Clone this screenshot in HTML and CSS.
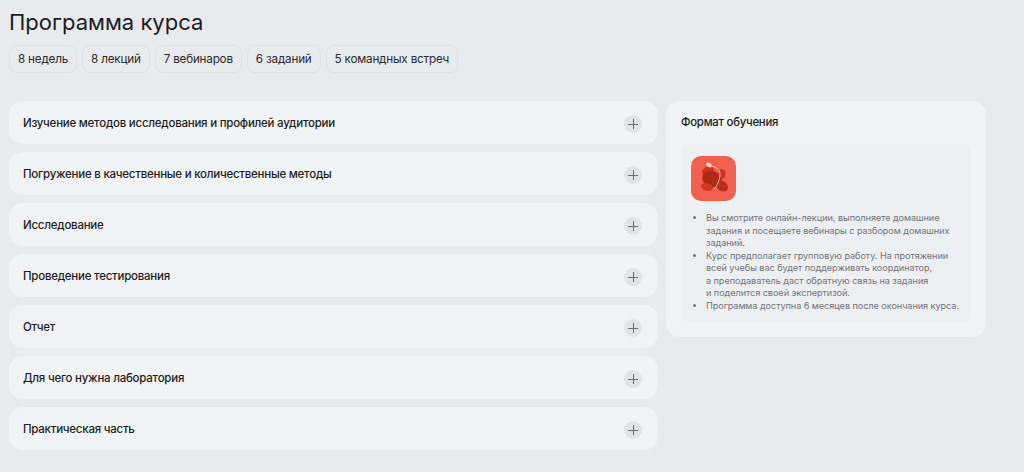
FILE: index.html
```html
<!DOCTYPE html>
<html lang="ru">
<head>
  <meta charset="UTF-8">
  <meta name="viewport" content="width=device-width, initial-scale=1.0">
  <title>Программа курса</title>
  <link rel="stylesheet" href="styles.css">
</head>
<body>
  <h1 class="title">Программа курса</h1>

  <div class="tags">
    <span class="tag">8 недель</span>
    <span class="tag">8 лекций</span>
    <span class="tag">7 вебинаров</span>
    <span class="tag">6 заданий</span>
    <span class="tag">5 командных встреч</span>
  </div>

  <div class="content">
    <!-- Accordion -->
    <div class="modules">
      <div class="module"><span>Изучение методов исследования и профилей аудитории</span><i class="plus"></i></div>
      <div class="module"><span>Погружение в качественные и количественные методы</span><i class="plus"></i></div>
      <div class="module"><span>Исследование</span><i class="plus"></i></div>
      <div class="module"><span>Проведение тестирования</span><i class="plus"></i></div>
      <div class="module"><span>Отчет</span><i class="plus"></i></div>
      <div class="module"><span>Для чего нужна лаборатория</span><i class="plus"></i></div>
      <div class="module"><span>Практическая часть</span><i class="plus"></i></div>
    </div>

    <!-- Format card -->
    <div class="format">
      <h2 class="format-title">Формат обучения</h2>
      <div class="format-body">
        <svg class="format-icon" xmlns="http://www.w3.org/2000/svg" viewBox="0 0 45 45">
          <rect width="45" height="45" rx="10" fill="#f2604f"></rect>
          <ellipse cx="17" cy="15" rx="6" ry="4.5" fill="#d2301f" transform="rotate(-25 17 15)"></ellipse>
          <ellipse cx="21" cy="23" rx="10" ry="8" fill="#ab2a18" transform="rotate(20 21 23)"></ellipse>
          <ellipse cx="31" cy="30" rx="6.5" ry="5" fill="#b9301d" transform="rotate(35 31 30)"></ellipse>
          <ellipse cx="16" cy="31" rx="6" ry="4" fill="#d23a26" transform="rotate(15 16 31)"></ellipse>
          <ellipse cx="31" cy="18" rx="3.5" ry="5" fill="#c93423"></ellipse>
          <path d="M18 10c6 0 11 3 11 8 0 6-3 12-6 15" fill="none" stroke="#f2b7a9" stroke-width="1"></path>
          <ellipse cx="18" cy="9" rx="3" ry="2" fill="#f8d9d0" transform="rotate(30 18 9)"></ellipse>
        </svg>
        <ul class="format-list">
          <li>Вы смотрите онлайн-лекции, выполняете домашние задания и посещаете вебинары с разбором домашних заданий.</li>
          <li>Курс предполагает групповую работу. На протяжении всей учебы вас будет поддерживать координатор, а&nbsp;преподаватель даст обратную связь на задания и&nbsp;поделится своей экспертизой.</li>
          <li>Программа доступна 6 месяцев после окончания курса.</li>
        </ul>
      </div>
    </div>
  </div>
</body>
</html>
```

FILE: styles.css
```css
body {
  font-family: Inter, "Noto Sans", sans-serif;
  margin: 0;
  padding: 0 0 0 9px;
  background: #e9eaee;
  color: #1b1c1f;
  height: 472px;
  overflow: hidden;
}
.title {
  margin: 0;
  padding-top: 7px;
  font-size: 22px;
  line-height: 30px;
  font-weight: 400;
}
.tags {
  display: flex;
  gap: 5px;
  margin-top: 8px;
}
.tag {
  display: block;
  height: 26px;
  padding: 0 8px;
  border: 1px solid #dfe0e4;
  border-radius: 8px;
  font-size: 11.7px;
  letter-spacing: -0.2px;
  line-height: 26px;
  color: #2a2b2f;
}
.content {
  display: flex;
  align-items: flex-start;
  gap: 8px;
  margin-top: 28px;
}
.modules {
  width: 649px;
  display: flex;
  flex-direction: column;
  gap: 8px;
}
.module {
  display: flex;
  align-items: center;
  justify-content: space-between;
  height: 43px;
  padding: 0 16px 0 14px;
  background: #f2f3f5;
  border-radius: 14px;
  font-size: 11.5px;
  letter-spacing: -0.24px;
  font-weight: 500;
}
.plus {
  position: relative;
  display: block;
  width: 18px;
  height: 18px;
  border-radius: 50%;
  background: #e2e3e6;
  margin-top: 3px;
}
.plus::before, .plus::after {
  content: "";
  position: absolute;
  background: #6d6e73;
}
.plus::before {
  left: 4px;
  top: 8.5px;
  width: 10px;
  height: 1px;
}
.plus::after {
  left: 8.5px;
  top: 4px;
  width: 1px;
  height: 10px;
}
.format {
  width: 320px;
  height: 236px;
  box-sizing: border-box;
  padding: 14px 15px;
  background: #f2f3f5;
  border-radius: 14px;
}
.format-title {
  margin: 0;
  font-size: 11.4px;
  letter-spacing: -0.25px;
  line-height: 14px;
  font-weight: 500;
}
.format-body {
  margin-top: 15px;
  height: 178px;
  box-sizing: border-box;
  padding: 12px 4px 0 10px;
  background: #eeeff2;
  border-radius: 8px;
}
.format-icon {
  display: block;
  width: 45px;
  height: 45px;
}
.format-list {
  margin: 11px 0 0;
  padding: 0 0 0 15px;
  font-size: 9.15px;
  letter-spacing: -0.06px;
  line-height: 12.5px;
  color: #737478;
}
```
